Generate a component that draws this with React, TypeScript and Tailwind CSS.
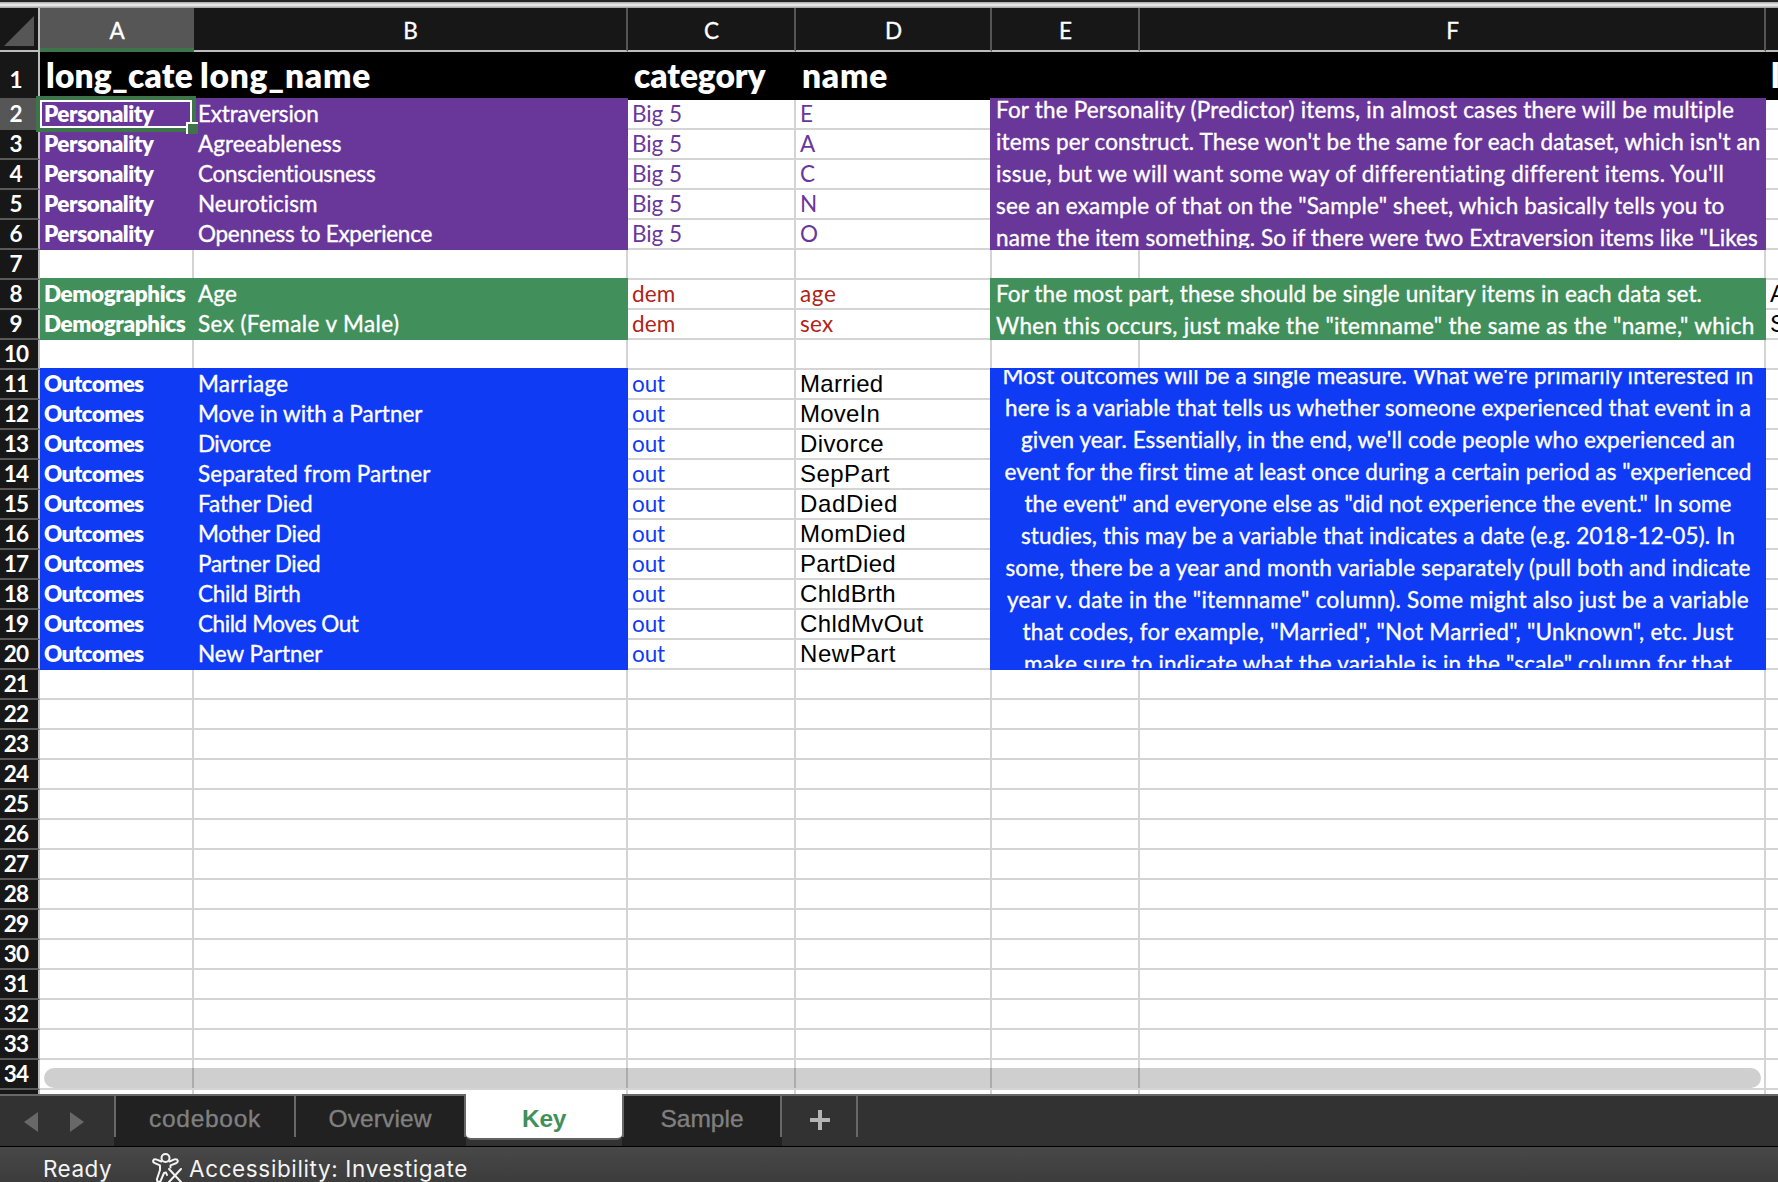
import { useLayoutEffect, useRef, useState } from "react";

const LATO = "font-['Lato',sans-serif]";
const SANS = "font-['Liberation_Sans',sans-serif]";

/** Text whose letter spacing is tuned so that it runs exactly `w` pixels wide. */
function Fit({ w, children, className = "" }: { w: number; children: string; className?: string }) {
  const ref = useRef<HTMLSpanElement>(null);
  const [spacing, setSpacing] = useState(0);
  useLayoutEffect(() => {
    const el = ref.current;
    if (!el) return;
    el.style.letterSpacing = "0px";
    const natural = el.getBoundingClientRect().width;
    setSpacing((w - natural) / children.length);
    el.style.letterSpacing = `${(w - natural) / children.length}px`;
  }, [w, children]);
  return (
    <span
      ref={ref}
      className={`inline-block whitespace-pre [font-variant-ligatures:none] ${className}`}
      style={{ letterSpacing: `${spacing}px` }}
    >
      {children}
    </span>
  );
}

type T = [string, number];
type Row = { a?: T; b?: T; c?: T; d?: T; g?: string };

const P: T = ["Personality", 109.5];
const D: T = ["Demographics", 141.5];
const O: T = ["Outcomes", 99.5];
const BIG: T = ["Big 5", 50];
const DEM: T = ["dem", 43.5];
const OUT: T = ["out", 33];

const rows: Record<number, Row> = {
  2: { a: P, b: ["Extraversion", 120.5], c: BIG, d: ["E", 13] },
  3: { a: P, b: ["Agreeableness", 143.5], c: BIG, d: ["A", 14.5] },
  4: { a: P, b: ["Conscientiousness", 177.5], c: BIG, d: ["C", 14] },
  5: { a: P, b: ["Neuroticism", 119.5], c: BIG, d: ["N", 16.5] },
  6: { a: P, b: ["Openness to Experience", 234], c: BIG, d: ["O", 16.5] },
  8: { a: D, b: ["Age", 39], c: DEM, d: ["age", 36.5], g: "A" },
  9: { a: D, b: ["Sex (Female v Male)", 201.5], c: DEM, d: ["sex", 33.5], g: "S" },
  11: { a: O, b: ["Marriage", 90.5], c: OUT, d: ["Married", 83.5] },
  12: { a: O, b: ["Move in with a Partner", 224.5], c: OUT, d: ["MoveIn", 80] },
  13: { a: O, b: ["Divorce", 72.5], c: OUT, d: ["Divorce", 84] },
  14: { a: O, b: ["Separated from Partner", 232.5], c: OUT, d: ["SepPart", 90] },
  15: { a: O, b: ["Father Died", 114.5], c: OUT, d: ["DadDied", 98] },
  16: { a: O, b: ["Mother Died", 122.5], c: OUT, d: ["MomDied", 106] },
  17: { a: O, b: ["Partner Died", 122.5], c: OUT, d: ["PartDied", 96] },
  18: { a: O, b: ["Child Birth", 102.5], c: OUT, d: ["ChldBrth", 96] },
  19: { a: O, b: ["Child Moves Out", 160.5], c: OUT, d: ["ChldMvOut", 123.5] },
  20: { a: O, b: ["New Partner", 124.5], c: OUT, d: ["NewPart", 96] },
};

const personalityNote: T[] = [
  ["For the Personality (Predictor) items, in almost cases there will be multiple", 738],
  ["items per construct. These won't be the same for each dataset, which isn't an", 764.5],
  ["issue, but we will want some way of differentiating different items. You'll", 728],
  ['see an example of that on the "Sample" sheet, which basically tells you to', 728.5],
  ['name the item something. So if there were two Extraversion items like "Likes', 762],
];
const demographicsNote: T[] = [
  ["For the most part, these should be single unitary items in each data set.", 706],
  ['When this occurs, just make the "itemname" the same as the "name," which', 758.5],
];
const outcomesNote: T[] = [
  ["Most outcomes will be a single measure. What we're primarily interested in", 751],
  ["here is a variable that tells us whether someone experienced that event in a", 746],
  ["given year. Essentially, in the end, we'll code people who experienced an", 714],
  ['event for the first time at least once during a certain period as "experienced', 747],
  ['the event" and everyone else as "did not experience the event." In some', 707],
  ["studies, this may be a variable that indicates a date (e.g. 2018-12-05). In", 714],
  ["some, there be a year and month variable separately (pull both and indicate", 745],
  ['year v. date in the "itemname" column). Some might also just be a variable', 742],
  ['that codes, for example, "Married", "Not Married", "Unknown", etc. Just', 711],
  ['make sure to indicate what the variable is in the "scale" column for that', 708],
];

function fillOf(n: number) {
  if (n >= 2 && n <= 6) return "bg-[#693799]";
  if (n === 8 || n === 9) return "bg-[#418f5a]";
  if (n >= 11 && n <= 20) return "bg-[#0f3bf5]";
  return "";
}
function inkOf(n: number) {
  if (n <= 6) return "text-[#693799]";
  if (n <= 9) return "text-[#b02418]";
  return "text-[#0f3bf5]";
}

const GRID = "border-r-2 border-b-2 border-[#d4d4d4]";
const COLS = "grid-cols-[40px_154px_434px_168px_196px_148px_626px_12px]";
const BODY = "text-[22.5px] leading-[27px]";
const HEAVIER = "[-webkit-text-stroke:0.35px_currentColor]";

function ColumnHeader({ label }: { label: string }) {
  return (
    <div className="flex h-[44px] justify-center border-r-2 border-b-2 border-r-[#555] border-b-[#bdbdbd] bg-[#171717] pt-[9px] pl-[1px] text-[22.5px] leading-[28px]">
      <span className={HEAVIER}>{label}</span>
    </div>
  );
}

function SheetRow({ n }: { n: number }) {
  const r = rows[n] ?? {};
  const fill = fillOf(n);
  const filled = `${fill} -mt-[2px] pt-[2px] text-white ${BODY}`;
  const at = { gridRow: n };
  return (
    <>
      <div
        style={at}
        className={`col-start-1 flex justify-center border-r-2 border-r-[#bdbdbd] pr-[6px] text-[22.5px] leading-[27px] font-bold text-white ${
          n === 2 ? "-mt-[2px] bg-[#565656] pt-[2px]" : "border-b-2 border-b-[#5a5a5a] bg-[#171717]"
        }`}
      >
        {n > 9 ? <Fit w={24.5}>{String(n)}</Fit> : n}
      </div>
      <div style={at} className={`col-start-2 ${fill ? `${filled} pl-[4px]` : GRID}`}>
        {r.a && <Fit w={r.a[1]} className="font-extrabold">{r.a[0]}</Fit>}
      </div>
      <div style={at} className={`col-start-3 ${fill ? `${filled} pl-[4px]` : GRID}`}>
        {r.b && <Fit w={r.b[1]} className={HEAVIER}>{r.b[0]}</Fit>}
      </div>
      <div style={at} className={`col-start-4 pl-[4px] ${GRID} ${BODY} ${inkOf(n)}`}>
        {r.c && <Fit w={r.c[1]}>{r.c[0]}</Fit>}
      </div>
      <div
        style={at}
        className={`col-start-5 pl-[4px] ${GRID} ${n > 10 ? `text-[24px] leading-[27px] text-black ${SANS}` : `${BODY} ${inkOf(n)}`}`}
      >
        {r.d && <Fit w={r.d[1]}>{r.d[0]}</Fit>}
      </div>
      {!fill && (
        <>
          <div style={at} className={`col-start-6 ${GRID}`} />
          <div style={at} className={`col-start-7 ${GRID}`} />
        </>
      )}
      <div
        style={at}
        className={`col-start-8 overflow-hidden border-b-2 border-[#d4d4d4] pl-[4px] text-[24px] leading-[27px] text-black ${SANS}`}
      >
        {r.g}
      </div>
    </>
  );
}

function Note({ lines, place, inner }: { lines: T[]; place: string; inner: string }) {
  return (
    <div className={`col-span-2 col-start-6 -mt-[2px] -ml-[2px] py-[2px] text-[22.5px] leading-[32px] text-white ${place}`}>
      <div className="h-full overflow-hidden">
        <div className={`flex flex-col ${inner} ${HEAVIER}`}>
          {lines.map(([t, w]) => (
            <Fit key={t} w={w}>
              {t}
            </Fit>
          ))}
        </div>
      </div>
    </div>
  );
}

function Tab({ label, w, className }: { label: string; w: number; className: string }) {
  return (
    <div className={`flex h-[50px] justify-center bg-[#212121] text-[24.5px] leading-[46px] text-[#808080] ${className} ${HEAVIER}`}>
      <Fit w={w}>{label}</Fit>
    </div>
  );
}

function Divider() {
  return (
    <div className="h-[50px] w-[2px] bg-[#212121]">
      <div className="h-[41px] bg-[#686868]" />
    </div>
  );
}

export default function App() {
  return (
    <div className={`h-[1182px] w-[1778px] overflow-hidden bg-[#323232] text-white ${LATO}`}>
      <div className="h-[2px] bg-[#252525]" />
      <div className="h-[6px] bg-linear-to-b from-[#a8a8a8] via-[#f4f4f4] to-[#9a9a9a]" />

      <div className={`grid h-[44px] bg-[#171717] ${COLS}`}>
        <div className="flex border-r-2 border-b-2 border-[#bdbdbd] pt-[8px] pl-[4px]">
          <svg width="30" height="30" viewBox="0 0 30 30">
            <path d="M30 0V30H0Z" fill="#565656" />
          </svg>
        </div>
        <div className="flex justify-center border-b-4 border-[#3d7449] bg-[#565656] pt-[9px] text-[22.5px] leading-[28px]">
          <span className={HEAVIER}>A</span>
        </div>
        <ColumnHeader label="B" />
        <ColumnHeader label="C" />
        <ColumnHeader label="D" />
        <ColumnHeader label="E" />
        <ColumnHeader label="F" />
        <div className="border-b-2 border-[#bdbdbd]" />
      </div>

      <div className={`relative grid h-[1042px] auto-rows-[30px] grid-rows-[48px] overflow-hidden bg-white ${COLS}`}>
        <div className="col-start-1 row-start-1 border-r-2 border-[#bdbdbd] bg-[#171717] pt-[12px] pr-[6px] text-center text-[22.5px] leading-[32px] font-bold">1</div>
        <div className="col-span-7 col-start-2 row-start-1 grid grid-cols-[154px_434px_168px_196px_774px_12px] bg-black text-[33.5px] leading-[47px] font-extrabold">
          <div className="w-[153px] overflow-hidden pl-[6px]"><Fit w={147}>long_cate</Fit></div>
          <div className="pl-[6px]"><Fit w={171}>long_name</Fit></div>
          <div className="pl-[6px]"><Fit w={131.5}>category</Fit></div>
          <div className="pl-[6px]"><Fit w={86}>name</Fit></div>
          <div />
          <div className="overflow-hidden pl-[5px]">l</div>
        </div>
        {Array.from({ length: 34 }, (_, i) => (
          <SheetRow key={i} n={i + 2} />
        ))}
        <Note lines={personalityNote} place="row-start-2 row-span-5 bg-[#693799]" inner="-mt-[6px] items-start pl-[6px]" />
        <Note lines={demographicsNote} place="row-start-8 row-span-2 bg-[#418f5a]" inner="-mt-[2px] items-start pl-[6px]" />
        <Note lines={outcomesNote} place="row-start-11 row-span-10 bg-[#0f3bf5]" inner="-mt-[10px] items-center" />

        <div className="absolute top-[44px] left-[36px] h-[36px] w-[160px] border-4 border-[#3d7449]">
          <div className="h-full w-full border-2 border-white" />
          <div className="absolute -right-[6px] -bottom-[6px] h-[12px] w-[12px] border-t-2 border-l-2 border-white bg-[#3d7449]" />
        </div>
        <div className="absolute top-[1016px] left-[44px] h-[20px] w-[1717px] rounded-full bg-black/19" />
      </div>

      <div className={`flex h-[52px] ${SANS}`}>
        <div className="flex h-[52px] w-[466px] border-t-2 border-[#686868]">
          <div className="flex w-[114px] gap-[32px] pt-[16px] pl-[24px]">
            <svg width="14" height="20" viewBox="0 0 14 20"><path d="M14 0V20L0 10Z" fill="#686868" /></svg>
            <svg width="14" height="20" viewBox="0 0 14 20"><path d="M0 0V20L14 10Z" fill="#686868" /></svg>
          </div>
          <Divider />
          <Tab label="codebook" w={112} className="w-[178px]" />
          <Divider />
          <Tab label="Overview" w={103} className="w-[168px]" />
          <Divider />
        </div>
        <div className="w-[156px]">
          <div className="flex h-[46px] justify-center rounded-b-[5px] border-b-2 border-[#636363] bg-white text-[24.5px] leading-[50px] font-bold text-[#418f5a]">
            <Fit w={44}>Key</Fit>
          </div>
        </div>
        <div className="flex h-[52px] flex-1 border-t-2 border-[#686868]">
          <Divider />
          <Tab label="Sample" w={83} className="w-[156px]" />
          <Divider />
          <div className="flex w-[74px] justify-center pt-[14px] pl-[2px]">
            <svg width="20" height="20" viewBox="0 0 20 20"><path d="M10 0V20M0 10H20" stroke="#b4b4b4" strokeWidth="4" /></svg>
          </div>
          <div className="h-[41px] w-[2px] bg-[#686868]" />
        </div>
      </div>

      <div className="flex h-[36px] border-t border-black bg-linear-to-b from-[#484848] to-[#3c3c3c] pl-[43px] font-['Inter',sans-serif] text-[22.5px] leading-[44px] text-[#f4f4f4]">
        <Fit w={69}>Ready</Fit>
        <svg className="mt-[6px] ml-[40px]" width="31" height="30" viewBox="0 0 31 30" fill="none" stroke="#f4f4f4" strokeWidth="2" strokeLinecap="round" strokeLinejoin="round">
          <circle cx="13.5" cy="5" r="4" />
          <path d="M9.5 8.5L4 6.4C1 5.5 0 9 2.8 10.2L8 12.4V17L5 26C4.5 29 8 30 9 27L12 20L14 19.5L15 22M17.5 8.5L22.5 6.4C26 5.5 27 9 24 10.2L18.5 12.4V14.5" />
          <path d="M17 16L29 29M29 16L17 29" />
        </svg>
        <Fit w={279} className="ml-[6px]">Accessibility: Investigate</Fit>
      </div>
    </div>
  );
}
